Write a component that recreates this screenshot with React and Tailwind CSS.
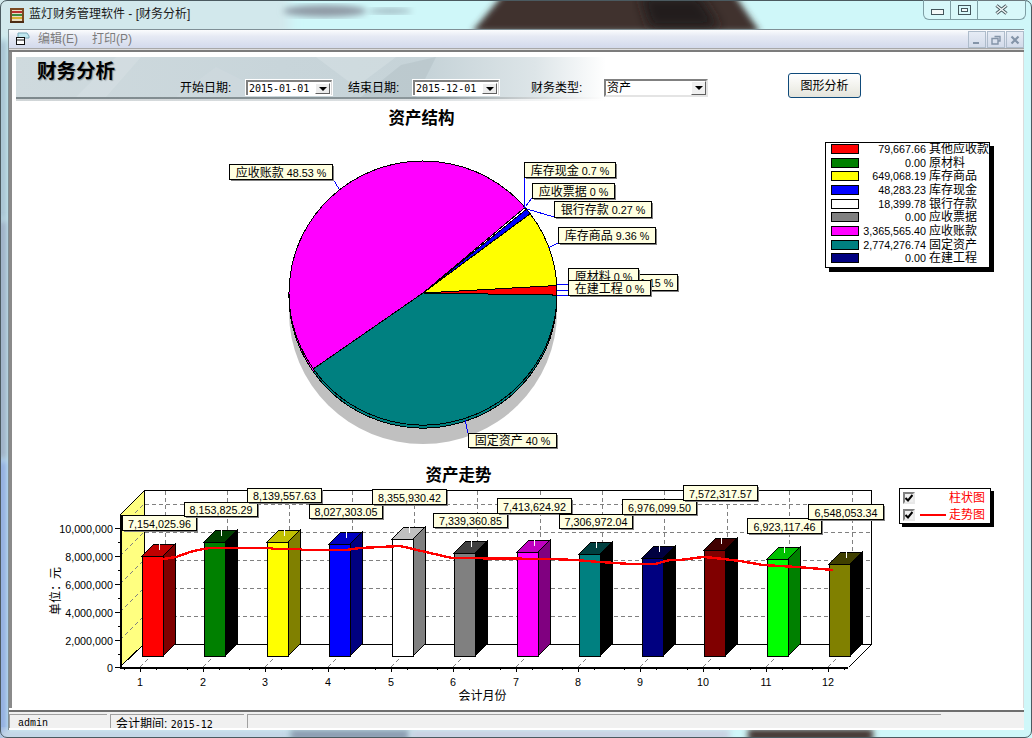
import React from "react";

const PIE = { cx: 423, cy: 293, rx: 134, ry: 132 };
const pt = (a, dy = 0) => {
  const t = (a * Math.PI) / 180;
  return [PIE.cx + PIE.rx * Math.cos(t), PIE.cy + dy - PIE.ry * Math.sin(t)];
};
const slicePath = (a0, a1, dy = 0) => {
  const [x0, y0] = pt(a0, dy);
  const [x1, y1] = pt(a1, dy);
  const large = a1 - a0 > 180 ? 1 : 0;
  return `M${PIE.cx} ${PIE.cy + dy}L${x0} ${y0}A${PIE.rx} ${PIE.ry} 0 ${large} 0 ${x1} ${y1}Z`;
};
const slices = [
  ["#008080", 215.1, 359.1],
  ["#ff0000", 359.1, 363.24],
  ["#ffff00", 3.24, 36.9],
  ["#0000ff", 36.9, 39.44],
  ["#ffffff", 39.44, 40.41],
  ["#ff00ff", 40.41, 215.1],
];

const pieLabels = [
  { b: [572, 274, 677, 290], cn: "其他应收款", num: "1.15 %" },
  { b: [568, 268, 638, 284], cn: "原材料", num: "0 %" },
  { b: [558, 227, 655, 243], cn: "库存商品", num: "9.36 %" },
  { b: [524, 162, 615, 177], cn: "库存现金", num: "0.7 %" },
  { b: [554, 201, 651, 217], cn: "银行存款", num: "0.27 %" },
  { b: [532, 183, 614, 198], cn: "应收票据", num: "0 %" },
  { b: [229, 164, 332, 179], cn: "应收账款", num: "48.53 %" },
  { b: [468, 433, 556, 447], cn: "固定资产", num: "40 %" },
  { b: [568, 280, 650, 295], cn: "在建工程", num: "0 %" },
];
const leaders = [
  [333, 179, 339, 189],
  [524.5, 177, 524.5, 207],
  [524.5, 207, 526, 208],
  [532, 198, 526, 206],
  [554, 217, 527, 209],
  [558, 243, 548, 248],
  [557, 284.5, 572, 284.5],
  [557, 290.5, 572, 290.5],
  [557, 295.5, 568, 295.5],
  [465, 420, 468, 433],
];

const legendRows = [
  ["#ff0000", "79,667.66", "其他应收款"],
  ["#008000", "0.00", "原材料"],
  ["#ffff00", "649,068.19", "库存商品"],
  ["#0000ff", "48,283.23", "库存现金"],
  ["#ffffff", "18,399.78", "银行存款"],
  ["#808080", "0.00", "应收票据"],
  ["#ff00ff", "3,365,565.40", "应收账款"],
  ["#008080", "2,774,276.74", "固定资产"],
  ["#000080", "0.00", "在建工程"],
];

const bars = [
  { x: 142, t: 556, f: "#ff0000", top: "#c00000", side: "#800000", lab: [122, 515, 196, 530], v: "7,154,025.96" },
  { x: 204, t: 542, f: "#008000", top: "#004000", side: "#000000", lab: [184, 502, 257, 516], v: "8,153,825.29" },
  { x: 267, t: 542, f: "#ffff00", top: "#c0c000", side: "#808000", lab: [247, 488, 321, 502], v: "8,139,557.63" },
  { x: 329, t: 544, f: "#0000ff", top: "#0000c0", side: "#000080", lab: [309, 504, 382, 518], v: "8,027,303.05" },
  { x: 392, t: 539, f: "#ffffff", top: "#c0c0c0", side: "#808080", lab: [372, 489, 446, 504], v: "8,355,930.42" },
  { x: 454, t: 553, f: "#808080", top: "#404040", side: "#000000", lab: [433, 513, 507, 527], v: "7,339,360.85" },
  { x: 517, t: 552, f: "#ff00ff", top: "#c000c0", side: "#800080", lab: [497, 498, 571, 513], v: "7,413,624.92" },
  { x: 579, t: 554, f: "#008080", top: "#004040", side: "#000000", lab: [559, 514, 632, 528], v: "7,306,972.04" },
  { x: 642, t: 558, f: "#000080", top: "#000040", side: "#000000", lab: [622, 499, 696, 514], v: "6,976,099.50" },
  { x: 704, t: 550, f: "#800000", top: "#400000", side: "#000000", lab: [683, 485, 757, 500], v: "7,572,317.57" },
  { x: 767, t: 559, f: "#00ff00", top: "#00c000", side: "#008000", lab: [747, 518, 821, 533], v: "6,923,117.46" },
  { x: 829, t: 564, f: "#808000", top: "#404000", side: "#000000", lab: [808, 504, 883, 519], v: "6,548,053.34" },
];
const majorX = [140, 203, 265, 328, 391, 453, 516, 578, 640, 703, 766, 828];
const backX = [165, 227, 289, 352, 414, 477, 540, 602, 664, 727, 789, 852];
const yTicks = [
  [528, "10,000,000"],
  [556, "8,000,000"],
  [584, "6,000,000"],
  [612, "4,000,000"],
  [640, "2,000,000"],
  [667, "0"],
];
const trend =
  "163,559 176,557 190,552 203,549 210,548 271,548 273,549 301,549 302,550 346,550 360,548 380,547 400,546 413,549 430,553 452,558 552,559 575,560 600,562 630,564 655,564 670,560 680,560 703,557 715,558 740,561 763,565 797,567 833,570";

function Box({ b, children, shadow = "#808080" }) {
  const [x0, y0, x1, y1] = b;
  return (
    <g>
      <rect x={x0 + 2} y={y0 + 2} width={x1 - x0} height={y1 - y0} fill={shadow} shapeRendering="crispEdges" />
      <rect x={x0 + 0.5} y={y0 + 0.5} width={x1 - x0} height={y1 - y0} fill="#ffffe1" stroke="#000" shapeRendering="crispEdges" />
      <text x={(x0 + x1) / 2 + 0.5} y={(y0 + y1) / 2 + 1} textAnchor="middle" dominantBaseline="central" className="fill-black">
        {children}
      </text>
    </g>
  );
}

function PieChart() {
  return (
    <svg viewBox="12 100 1010 360" className="block w-[1010px] h-[360px]">
      <text x="421.5" y="118" textAnchor="middle" dominantBaseline="central" className="text-[16.5px] font-bold fill-black">资产结构</text>
      <ellipse cx={PIE.cx} cy={PIE.cy + 19} rx={PIE.rx} ry={PIE.ry} fill="#c0c0c0" />
      <g shapeRendering="crispEdges" stroke="#000">
        {slices.map(([c, a0, a1]) => (
          <path key={"r" + a0} d={slicePath(a0, a1, 3)} fill={c} />
        ))}
        {slices.map(([c, a0, a1]) => (
          <path key={a0} d={slicePath(a0, a1)} fill={c} />
        ))}
      </g>
      <g stroke="#0000ff" shapeRendering="crispEdges">
        {leaders.map((l, i) => (
          <line key={i} x1={l[0]} y1={l[1]} x2={l[2]} y2={l[3]} />
        ))}
      </g>
      {pieLabels.map((l) => (
        <Box key={l.cn} b={l.b}>
          <tspan className="text-[12px]">{l.cn}</tspan>
          <tspan className="text-[10.75px]"> {l.num}</tspan>
        </Box>
      ))}
    </svg>
  );
}

function BarChart() {
  return (
    <svg viewBox="12 460 1010 248" className="block w-[1010px] h-[248px]">
      <text x="458.5" y="475" textAnchor="middle" dominantBaseline="central" className="text-[16.5px] font-bold fill-black">资产走势</text>
      <g shapeRendering="crispEdges">
        <polygon points="120,515 144,491 144,644 120,667" fill="#ffff80" stroke="#000" />
        <path d="M144.5 490.5H871.5V644.5H144.5" fill="none" stroke="#000" />
        <line x1="871.5" y1="644.5" x2="848.5" y2="667.5" stroke="#000" />
        <g stroke="#808080" strokeDasharray="4 3">
          {[504, 532, 560, 588, 616].map((y) => (
            <line key={y} x1="145" y1={y + 0.5} x2="871" y2={y + 0.5} />
          ))}
          {backX.map((x) => (
            <line key={x} x1={x + 0.5} y1="491" x2={x + 0.5} y2="644" />
          ))}
          {[528, 556, 584, 612, 640].map((y) => (
            <line key={y} x1="120" y1={y} x2="144" y2={y - 24} />
          ))}
          {majorX.map((x) => (
            <line key={x} x1={x} y1="667" x2={x + 24} y2="643" />
          ))}
        </g>
        {bars.map((b) => {
          const w = 21;
          const d = 12;
          return (
            <g key={b.x} stroke="#000">
              <polygon points={`${b.x + w},${b.t} ${b.x + w + d},${b.t - d} ${b.x + w + d},644 ${b.x + w},656`} fill={b.side} />
              <polygon points={`${b.x},${b.t} ${b.x + d},${b.t - d} ${b.x + w + d},${b.t - d} ${b.x + w},${b.t}`} fill={b.top} />
              <rect x={b.x + 0.5} y={b.t + 0.5} width={w} height={656 - b.t} fill={b.f} />
              <line x1={b.x + 17.5} y1={b.t - 12} x2={b.x + 17.5} y2={b.t - 6} stroke="#ffffff" />
            </g>
          );
        })}
        <line x1="120.5" y1="515" x2="120.5" y2="668" stroke="#000" strokeWidth="2" />
        <line x1="120" y1="667.5" x2="848" y2="667.5" stroke="#000" strokeWidth="2" />
        {yTicks.map(([y]) => (
          <line key={y} x1="115" y1={y + 0.5} x2="120" y2={y + 0.5} stroke="#000" />
        ))}
        {[542, 570, 598, 626, 654].map((y) => (
          <line key={y} x1="118" y1={y + 0.5} x2="120" y2={y + 0.5} stroke="#000" />
        ))}
        {majorX.map((x) => (
          <g key={x} stroke="#000">
            <line x1={x + 0.5} y1="668" x2={x + 0.5} y2="672" />
            <line x1={x - 15.5} y1="668" x2={x - 15.5} y2="670" />
            <line x1={x + 16.5} y1="668" x2={x + 16.5} y2="670" />
          </g>
        ))}
        <polyline points={trend} fill="none" stroke="#ff0000" strokeWidth="2.4" />
      </g>
      {bars.map((b) => (
        <Box key={b.v} b={b.lab}>
          <tspan className="text-[10.75px]">{b.v}</tspan>
        </Box>
      ))}
      <g className="text-[10.75px] fill-black">
        {yTicks.map(([y, t]) => (
          <text key={t} x="113" y={y + 0.5} textAnchor="end" dominantBaseline="central">{t}</text>
        ))}
        {majorX.map((x, i) => (
          <text key={x} x={x} y="682" textAnchor="middle" dominantBaseline="central">{i + 1}</text>
        ))}
      </g>
      <text x="482.5" y="696" textAnchor="middle" dominantBaseline="central" className="text-[12px] fill-black">会计月份</text>
      <text transform="translate(55.5 591) rotate(-90)" textAnchor="middle" dominantBaseline="central" className="text-[12px] fill-black">单位：元</text>
    </svg>
  );
}

function PieLegend() {
  return (
    <div className="absolute left-[813px] top-[42px] w-[165px] h-[126px] bg-white border border-black shadow-[4px_4px_0_#000] flex flex-col pt-px text-[12px] text-black">
      {legendRows.map(([c, v, n]) => (
        <div key={n} className="flex items-start h-[14px]">
          <span className="ml-[5px] w-[28px] h-[10px] border border-black shrink-0" style={{ backgroundColor: c }} />
          <span className="w-[67px] text-right text-[10.75px] leading-[10px] shrink-0">{v}</span>
          <span className="ml-[3px] leading-[10px] whitespace-nowrap">{n}</span>
        </div>
      ))}
    </div>
  );
}

function Check() {
  return (
    <span className="w-[12px] h-[12px] shrink-0 border-2 border-t-[#808080] border-l-[#808080] border-r-[#e8e8e8] border-b-[#e8e8e8] bg-[#f0f0f0] flex items-center justify-center">
      <svg viewBox="0 0 8 8" className="w-[8px] h-[8px]">
        <path d="M0.5 4L3 6.5L7.5 1" fill="none" stroke="#000" strokeWidth="2" />
      </svg>
    </span>
  );
}

function BarLegend() {
  return (
    <div className="absolute left-[887px] top-[28px] w-[92px] h-[36px] bg-white border border-black shadow-[3px_3px_0_#000] flex flex-col justify-center gap-[5px] pl-[3px] text-[12px] text-[#ff0000]">
      <div className="flex items-center h-[12px]">
        <Check />
        <span className="ml-[34px] leading-[12px]">柱状图</span>
      </div>
      <div className="flex items-center h-[12px]">
        <Check />
        <span className="ml-[5px] w-[26px] h-[2px] bg-[#ff0000]" />
        <span className="ml-[3px] leading-[12px]">走势图</span>
      </div>
    </div>
  );
}

function DatePick({ value }) {
  return (
    <div className="w-[88px] h-[17px] bg-white p-px">
      <div className="h-full flex items-center border-t-2 border-l-2 border-t-[#808080] border-l-[#808080] border-r border-r-[#d8d8d8]">
        <span className="ml-[1px] font-['DejaVu_Sans_Mono',monospace] text-[10px] leading-[12px] text-black">{value}</span>
        <span className="ml-auto mr-[1px] w-[15px] h-[11px] bg-[#ececec] border-r border-b border-r-[#606060] border-b-[#606060] border-t border-l border-t-white border-l-white flex items-center justify-center">
          <span className="w-0 h-0 border-x-[4px] border-x-transparent border-t-[4px] border-t-black" />
        </span>
      </div>
    </div>
  );
}

function Wallpaper() {
  return (
    <svg viewBox="0 0 1032 738" className="absolute inset-0 w-[1032px] h-[738px]">
      <defs>
        <filter id="b6"><feGaussianBlur stdDeviation="6" /></filter>
        <filter id="b3"><feGaussianBlur stdDeviation="3" /></filter>
      </defs>
      <rect width="1032" height="738" fill="#cff7f9" />
      <rect x="-10" y="-10" width="300" height="50" fill="#d2e8ec" filter="url(#b6)" />
      <polygon points="507,-10 731,-10 760,32 472,32" fill="#3f302e" filter="url(#b3)" />
      <polygon points="640,-4 700,-4 720,28 650,28" fill="#221c1c" filter="url(#b6)" />
      <ellipse cx="325" cy="11" rx="42" ry="6" fill="#8f9aa5" filter="url(#b3)" />
      <ellipse cx="390" cy="11" rx="22" ry="3" fill="#a0b8c0" filter="url(#b3)" />
      <rect x="-4" y="40" width="12" height="180" fill="#a9c3d3" filter="url(#b3)" />
      <rect x="-4" y="220" width="12" height="240" fill="#9fb0c6" filter="url(#b3)" />
      <rect x="-4" y="460" width="12" height="290" fill="#93aee0" filter="url(#b3)" />
      <rect x="0" y="729" width="290" height="12" fill="#c4d6e6" filter="url(#b3)" />
      <rect x="290" y="729" width="120" height="12" fill="#8c9bb0" filter="url(#b3)" />
      <rect x="410" y="729" width="320" height="12" fill="#c9d1e2" filter="url(#b3)" />
      <rect x="748" y="729" width="125" height="12" fill="#43302e" filter="url(#b3)" />
    </svg>
  );
}

function Banner() {
  return (
    <div className="absolute left-0 top-0 w-[590px] h-[44px]">
      <div className="h-[40px] bg-[linear-gradient(90deg,#cfdade_0%,#c8d5da_45%,#c6d3d8_70%,#dde5e8_88%,#ffffff_100%)] relative overflow-hidden">
        <svg viewBox="0 0 590 40" className="absolute inset-0 w-[590px] h-[40px]">
          <polygon points="60,40 100,0 125,0 90,40" fill="#dde6e8" opacity="0.35" />
          <polygon points="300,0 380,0 340,30" fill="#dfe7ea" opacity="0.35" />
          <polygon points="345,40 385,8 420,0 400,40" fill="#a9b8bd" opacity="0.35" />
          <polygon points="200,10 260,40 160,40" fill="#d3dde1" opacity="0.35" />
        </svg>
      </div>
      <div className="h-[2px] bg-[linear-gradient(90deg,#7d888c_0%,#8c979b_70%,#ffffff_100%)]" />
      <div className="h-[2px] bg-[linear-gradient(90deg,#d0d5d7_0%,#dde1e3_70%,#ffffff_100%)]" />
    </div>
  );
}

function McBtn({ children }) {
  return (
    <span className="w-[18px] h-[17px] border border-[#aebccb] bg-[linear-gradient(180deg,#e6ecf5,#d3dbea)] flex items-center justify-center">
      <svg viewBox="0 0 12 12" className="w-[12px] h-[12px]">{children}</svg>
    </span>
  );
}

export default function App() {
  return (
    <div className="relative w-[1032px] h-[738px] overflow-hidden bg-white font-['Liberation_Sans','Noto_Sans_CJK_SC',sans-serif]">
      <Wallpaper />
      <div className="absolute inset-0 rounded-[7px] border border-[#4b5a60] pointer-events-none" />
      <div className="relative h-full flex flex-col pl-[8px] pr-[8px] pb-[8px]">
        {/* Title bar */}
        <div className="h-[29px] shrink-0 flex items-start">
          <svg viewBox="0 0 14 15" className="w-[14px] h-[15px] ml-[2px] mt-[8px]">
            <rect x="0" y="0" width="14" height="15" fill="#7a4a24" />
            <rect x="2" y="2" width="10" height="11" fill="#e8dcc0" />
            <rect x="2" y="3" width="10" height="2" fill="#b83030" />
            <rect x="2" y="6" width="10" height="2" fill="#3a8a40" />
            <rect x="2" y="9" width="10" height="2" fill="#d8b030" />
            <rect x="0" y="13" width="14" height="2" fill="#4c2c14" />
          </svg>
          <span className="ml-[5px] mt-[6px] text-[12px] leading-[16px] text-[#1a1a1a] whitespace-nowrap">蓝灯财务管理软件 - [财务分析]</span>
          <div className="ml-auto mr-[-2px] w-[103px] h-[20px] flex rounded-b-[6px] border border-t-0 border-[#7e9ea4] bg-[#ffffff30]">
            <span className="w-[27px] border-r border-[#7e9ea4] flex items-center justify-center">
              <svg viewBox="0 0 13 6" className="w-[13px] h-[6px] mt-[5px]">
                <rect x="0.5" y="0.5" width="12" height="5" fill="#f4f8f8" stroke="#44565c" />
              </svg>
            </span>
            <span className="w-[27px] border-r border-[#7e9ea4] flex items-center justify-center">
              <svg viewBox="0 0 13 10" className="w-[13px] h-[10px]">
                <rect x="0.5" y="0.5" width="12" height="9" fill="none" stroke="#44565c" />
                <rect x="3.5" y="3.5" width="6" height="3" fill="#f4f8f8" stroke="#44565c" />
              </svg>
            </span>
            <span className="flex-1 flex items-center justify-center">
              <svg viewBox="0 0 13 11" className="w-[13px] h-[11px]">
                <path d="M1.5 1.5L11.5 9.5M11.5 1.5L1.5 9.5" stroke="#44565c" strokeWidth="3.4" />
                <path d="M1.5 1.5L11.5 9.5M11.5 1.5L1.5 9.5" stroke="#f2f8f8" strokeWidth="1.6" />
              </svg>
            </span>
          </div>
        </div>

        {/* Client */}
        <div className="flex-1 min-h-0 flex flex-col bg-white border border-[#7f8f96] border-b-0 border-r-0">
          {/* Menu bar */}
          <div className="h-[18px] shrink-0 flex items-center bg-[linear-gradient(180deg,#fbfcfd_0%,#e6eaf4_35%,#d3daec_100%)]">
            <svg viewBox="0 0 15 14" className="w-[15px] h-[14px] ml-[6px]">
              <path d="M3 1H12L14 4V6H3Z" fill="#bfe6ee" stroke="#7aa8b8" />
              <rect x="1.5" y="5.5" width="8" height="7" fill="#fff" stroke="#111" />
              <path d="M1.5 8H9.5" stroke="#111" />
            </svg>
            <span className="ml-[8px] text-[12px] text-[#7c7c7c] whitespace-nowrap">编辑(E)</span>
            <span className="ml-[14px] text-[12px] text-[#7c7c7c] whitespace-nowrap">打印(P)</span>
            <div className="ml-auto flex gap-[1px] mt-[1px]">
              <McBtn><path d="M2 9H8" stroke="#8494a8" strokeWidth="2" /></McBtn>
              <McBtn>
                <path d="M4.5 2.5H10V7H8M2 4.5H8V10H2Z" fill="none" stroke="#8494a8" strokeWidth="1.4" />
              </McBtn>
              <McBtn><path d="M2.5 2.5L9.5 9.5M9.5 2.5L2.5 9.5" stroke="#8494a8" strokeWidth="2.2" /></McBtn>
            </div>
          </div>
          <div className="h-[1px] bg-[#a8a8a8] shrink-0" />
          <div className="h-[1px] bg-[#dedede] shrink-0" />
          <div className="h-[2px] bg-[#7c7c7c] shrink-0" />

          {/* MDI child */}
          <div className="shrink-0 flex flex-col border-l-[3px] border-l-[#8a8a8a] border-r border-r-[#dcdcdc] bg-white">
            {/* Toolbar */}
            <div className="relative h-[48px] shrink-0 pt-[5px] pl-[4px]">
              <div className="relative h-[43px]">
                <Banner />
                <div className="relative flex items-start text-[12px] text-black">
                  <span className="ml-[21px] mt-[2px] w-[143px] text-[19.5px] leading-[24px] font-bold [text-shadow:1px_1px_1px_#8a9498]">财务分析</span>
                  <span className="mt-[23px] w-[65px] leading-[16px] whitespace-nowrap">开始日期:</span>
                  <div className="mt-[22px]"><DatePick value="2015-01-01" /></div>
                  <span className="ml-[15px] mt-[23px] w-[64px] leading-[16px] whitespace-nowrap">结束日期:</span>
                  <div className="mt-[22px]"><DatePick value="2015-12-01" /></div>
                  <span className="ml-[31px] mt-[23px] w-[73px] leading-[16px] whitespace-nowrap">财务类型:</span>
                  <div className="mt-[22px] w-[104px] h-[18px] flex items-center bg-white border-2 border-t-[#808080] border-l-[#808080] border-r-[#e4e4e4] border-b-[#e4e4e4]">
                    <span className="ml-px leading-[14px]">资产</span>
                    <span className="ml-auto mr-0 w-[15px] h-[14px] bg-[#f0f0f0] border border-t-white border-l-white border-r-[#606060] border-b-[#606060] flex items-center justify-center">
                      <span className="w-0 h-0 border-x-[4px] border-x-transparent border-t-[4px] border-t-black" />
                    </span>
                  </div>
                  <button className="ml-[80px] mt-[16px] w-[73px] h-[25px] rounded-[3px] border border-[#0f4a7a] bg-[linear-gradient(180deg,#ffffff,#f0f0ea_60%,#e4e4dc)] text-[12px] leading-[22px] text-black">图形分析</button>
                </div>
              </div>
            </div>

            {/* Pie section */}
            <div className="relative h-[360px] shrink-0">
              <PieChart />
              <PieLegend />
            </div>

            {/* Bar section */}
            <div className="relative h-[248px] shrink-0">
              <BarChart />
              <BarLegend />
            </div>
          </div>

          {/* Status bar */}
          <div className="h-[2px] mt-[2px] bg-[#6e6e6e] shrink-0" />
          <div className="flex-1 min-h-0 bg-[#f0f0f0] pt-[2px] flex gap-[3px] overflow-hidden">
            <div className="w-[98px] border-t border-l border-[#a0a0a0] pl-[8px] pt-[1px] font-['Liberation_Mono',monospace] text-[10px] leading-[16px] text-black">admin</div>
            <div className="w-[134px] border-t border-l border-[#a0a0a0] pl-[5px] pt-[1px] text-[12px] leading-[16px] text-black whitespace-nowrap">
              会计期间: <span className="font-['DejaVu_Sans_Mono',monospace] text-[10px]">2015-12</span>
            </div>
            <div className="w-[694px] border-t border-l border-[#a0a0a0]" />
          </div>
          <div className="h-[2px] bg-white shrink-0" />
        </div>
      </div>
    </div>
  );
}
